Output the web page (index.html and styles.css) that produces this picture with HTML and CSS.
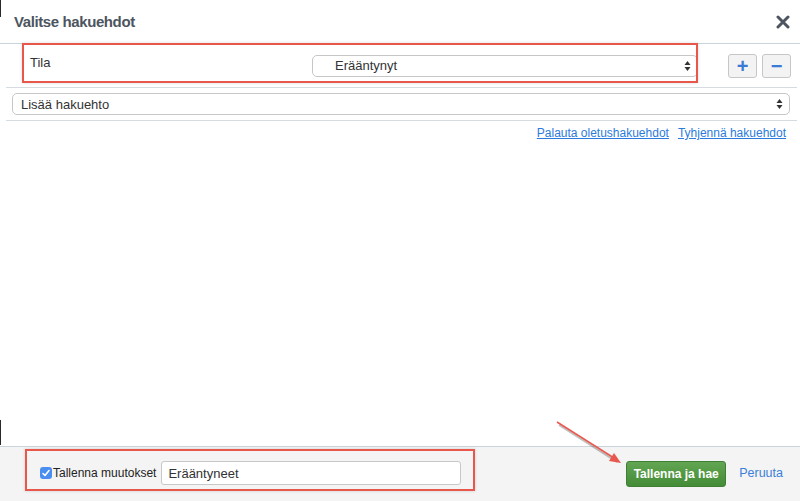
FILE: index.html
```html
<!DOCTYPE html>
<html lang="fi">
<head>
    <meta charset="UTF-8">
    <title>Valitse hakuehdot</title>
    <link rel="stylesheet" href="styles.css">
</head>
<body>
    <div class="modal">
        <div class="modal-header">
            <h1>Valitse hakuehdot</h1>
            <svg class="close" width="14" height="14" viewBox="0 0 14 14">
                <path d="M2 2 L12 12 M12 2 L2 12" stroke="#4c5560" stroke-width="3" stroke-linecap="round"/>
            </svg>
        </div>

        <div class="modal-body">
            <div class="criteria-row">
                <span class="criteria-label">Tila</span>
                <div class="select select-state">
                    <span>Erääntynyt</span>
                    <svg class="arrows" width="7" height="12" viewBox="0 0 7 12">
                        <path d="M3.5 1 L6.5 5 L0.5 5 Z M3.5 11 L6.5 7 L0.5 7 Z" fill="#333"/>
                    </svg>
                </div>
                <div class="row-buttons">
                    <button class="icon-btn">+</button>
                    <button class="icon-btn">&minus;</button>
                </div>
            </div>

            <div class="add-row">
                <div class="select select-wide">
                    <span>Lisää hakuehto</span>
                    <svg class="arrows" width="7" height="12" viewBox="0 0 7 12">
                        <path d="M3.5 1 L6.5 5 L0.5 5 Z M3.5 11 L6.5 7 L0.5 7 Z" fill="#333"/>
                    </svg>
                </div>
            </div>

            <div class="links">
                <a href="#">Palauta oletushakuehdot</a>
                <a href="#">Tyhjennä hakuehdot</a>
            </div>
        </div>

        <div class="modal-footer">
            <div class="save-changes">
                <span class="checkbox">
                    <svg width="12" height="12" viewBox="0 0 12 12">
                        <path d="M3 6.5 L5 8.5 L9 3.5" stroke="#fff" stroke-width="1.6" fill="none" stroke-linecap="round" stroke-linejoin="round"/>
                    </svg>
                </span>
                <label>Tallenna muutokset</label>
                <input type="text" value="Erääntyneet">
            </div>
            <div class="footer-actions">
                <button class="btn-save">Tallenna ja hae</button>
                <a href="#" class="cancel">Peruuta</a>
            </div>
        </div>

        <!-- annotation marks drawn over the screenshot -->
        <div class="mark mark-criteria"></div>
        <div class="mark mark-save"></div>
        <svg class="arrow" width="90" height="60" viewBox="0 0 90 60">
            <path d="M4 3 L62 40" stroke="rgba(0,0,0,0.25)" stroke-width="2" transform="translate(1,2)"/>
            <path d="M3 2 L60 38" stroke="#e8584e" stroke-width="1.5"/>
            <path d="M67 43 L55 41 L60 33 Z" fill="#e8584e"/>
        </svg>
        <div class="edge edge-top"></div>
        <div class="edge edge-bottom"></div>
    </div>
</body>
</html>
```

FILE: styles.css
```css
body {
    margin: 0;
    font-family: "Liberation Sans", Arial, sans-serif;
    font-size: 13px;
    color: #333;
    background: #fff;
}
.modal {
    position: relative;
    width: 800px;
    height: 501px;
    display: flex;
    flex-direction: column;
    overflow: hidden;
}
.modal-header {
    height: 43px;
    padding: 0 10px 0 14px;
    border-bottom: 1px solid #c9d4de;
    display: flex;
    align-items: center;
    justify-content: space-between;
}
.modal-header h1 {
    margin: 0;
    font-size: 15px;
    font-weight: bold;
    color: #4c5560;
    letter-spacing: -0.4px;
}
.close {
    margin-top: 1px;
}
.modal-body {
    flex: 1;
    padding: 0 3px 0 6px;
}
.criteria-row {
    height: 43px;
    border-bottom: 1px solid #d6dbe0;
    display: flex;
    align-items: center;
    padding-left: 24px;
}
.criteria-label {
    width: 282px;
    margin-top: -6px;
}
.select {
    height: 20px;
    border: 1px solid #c6c6c6;
    border-radius: 5px;
    background: #fff;
    display: flex;
    align-items: center;
    justify-content: space-between;
    box-sizing: content-box;
}
.select-state {
    width: 356px;
    padding: 0 6px 0 22px;
}
.select-wide {
    flex: 1;
    padding: 0 6px 0 8px;
}
.arrows {
    display: block;
}
.row-buttons {
    display: flex;
    gap: 5px;
    margin-left: 30px;
}
.icon-btn {
    width: 29px;
    height: 24px;
    padding: 0;
    border: 1px solid #c6c6c6;
    border-radius: 3px;
    background: #f3f3f3;
    color: #3a7bd5;
    font-family: "Liberation Sans", Arial, sans-serif;
    font-size: 20px;
    font-weight: bold;
    line-height: 20px;
}
.add-row {
    height: 32px;
    border-bottom: 1px solid #d6dbe0;
    display: flex;
    align-items: center;
    padding: 0 7px 0 6px;
}
.links {
    display: flex;
    justify-content: flex-end;
    gap: 9px;
    padding: 5px 11px 0 0;
    font-size: 12px;
}
.links a {
    color: #2b7bdc;
}
.modal-footer {
    height: 55px;
    border-top: 1px solid #c9d4de;
    background: #f4f4f4;
    display: flex;
    align-items: center;
    justify-content: space-between;
    padding: 0 17px 2px 40px;
    box-sizing: border-box;
}
.save-changes {
    display: flex;
    align-items: center;
}
.checkbox {
    width: 12px;
    height: 12px;
    border-radius: 3px;
    background: #4a8ef2;
    display: inline-flex;
    margin-right: 1px;
}
.save-changes label {
    font-size: 12px;
    color: #222;
}
.save-changes input {
    margin-left: 5px;
    width: 286px;
    height: 22px;
    padding: 0 6px;
    border: 1px solid #c8c8c8;
    border-radius: 3px;
    font-family: "Liberation Sans", Arial, sans-serif;
    font-size: 13px;
    color: #333;
    background: #fff;
}
.footer-actions {
    display: flex;
    align-items: center;
    gap: 13px;
}
.btn-save {
    width: 100px;
    height: 26px;
    margin-top: 2px;
    border: 1px solid #3f7f33;
    border-radius: 3px;
    background: linear-gradient(#62a552, #448c37);
    color: #fff;
    font-family: "Liberation Sans", Arial, sans-serif;
    font-size: 12px;
    font-weight: bold;
}
.cancel {
    color: #3a80d8;
    text-decoration: none;
    font-size: 12.5px;
}
.mark {
    position: absolute;
    border: 2px solid #e9574c;
    box-shadow: 0 0 3px rgba(0, 0, 0, 0.15);
    box-sizing: border-box;
}
.mark-criteria {
    left: 22px;
    top: 43px;
    width: 676px;
    height: 40px;
}
.mark-save {
    left: 25px;
    top: 449px;
    width: 450px;
    height: 42px;
}
.arrow {
    position: absolute;
    left: 554px;
    top: 420px;
}
.edge {
    position: absolute;
    left: 0;
    width: 1px;
    background: #2a2a2a;
}
.edge-top {
    top: 0;
    height: 17px;
}
.edge-bottom {
    top: 420px;
    height: 25px;
}
```
